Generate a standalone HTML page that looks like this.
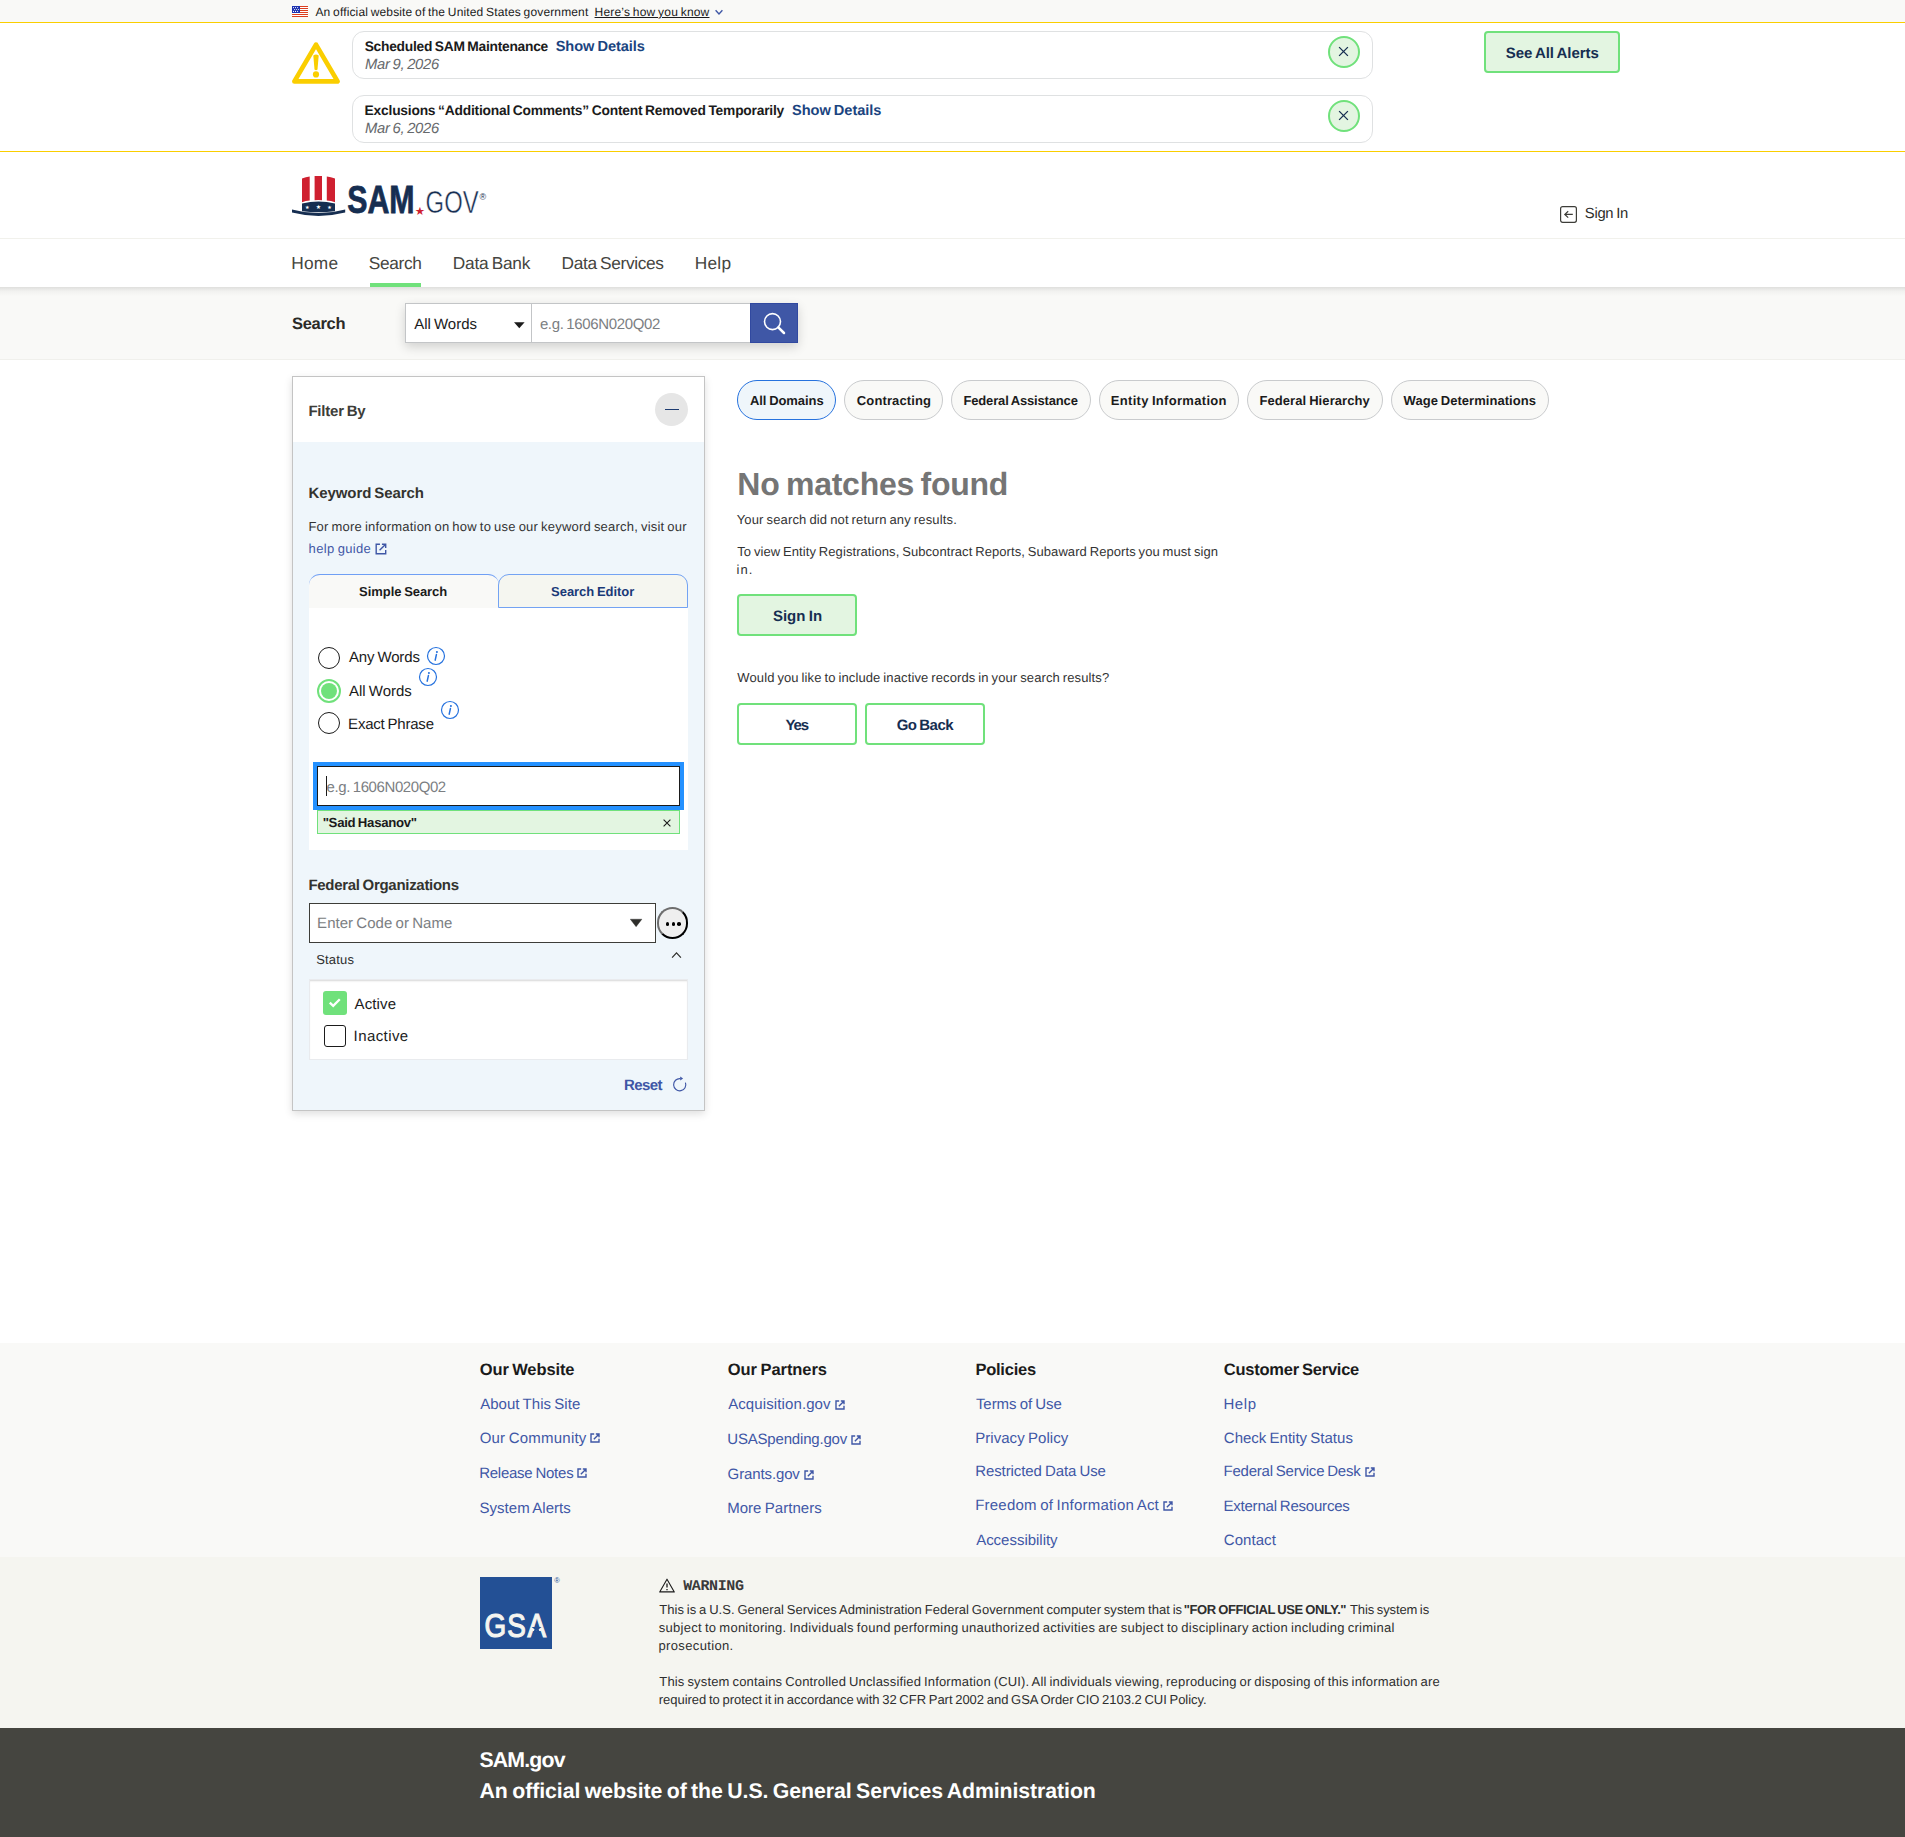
<!DOCTYPE html>
<html lang="en"><head><meta charset="utf-8"><title>SAM.gov | Search</title>
<style>
html,body{margin:0;padding:0}
body{width:1905px;height:1837px;position:relative;overflow:hidden;background:#fff;font-family:"Liberation Sans", sans-serif;color:#1b1b1b}
.b{position:absolute;box-sizing:border-box}
.t{position:absolute;display:block;margin:0;padding:0;white-space:pre;line-height:20px;font-family:"Liberation Sans", sans-serif;font-weight:400;color:#1b1b1b;text-decoration:none;text-rendering:geometricPrecision}
svg{position:absolute;overflow:visible}

</style></head><body>
<div class="b" style="left:0px;top:0px;width:1905px;height:22px;background:#f9f9f7"></div>
<div class="b" style="left:0px;top:22px;width:1905px;height:130px;background:#fff;border-top:1px solid #face00;border-bottom:1px solid #face00"></div>
<div class="b" style="left:0px;top:238px;width:1905px;height:1px;background:#f1f1ec"></div>
<div class="b" style="left:0px;top:287px;width:1905px;height:73px;background:#f9f9f7;border-bottom:1px solid #f0f0ec"></div>
<div class="b" style="left:0px;top:287px;width:1905px;height:9px;background:linear-gradient(#dfdfdd,#f1f1ef 45%,#f9f9f7)"></div>
<div class="b" style="left:0px;top:1343px;width:1905px;height:214px;background:#f9f9f7"></div>
<div class="b" style="left:0px;top:1557px;width:1905px;height:171px;background:#f5f5f0"></div>
<div class="b" style="left:0px;top:1728px;width:1905px;height:109px;background:#454540"></div>
<svg style="left:292px;top:6px" width="16" height="11" viewBox="0 0 16 11"><rect width="16" height="11" fill="#fff"/>
<g fill="#db3e1f"><rect y="0" width="16" height="1"/><rect y="2" width="16" height="1"/><rect y="4" width="16" height="1"/><rect y="6" width="16" height="1"/><rect y="8" width="16" height="1"/><rect y="10" width="16" height="1"/></g>
<rect width="8" height="7" fill="#1e33b1"/><g fill="#fff"><circle cx="1.5" cy="1.6" r=".55"/><circle cx="3.5" cy="1.6" r=".55"/><circle cx="5.6" cy="1.6" r=".55"/><circle cx="2.6" cy="3.5" r=".55"/><circle cx="4.6" cy="3.5" r=".55"/><circle cx="6.6" cy="3.5" r=".55"/><circle cx="1.5" cy="5.4" r=".55"/><circle cx="3.5" cy="5.4" r=".55"/><circle cx="5.6" cy="5.4" r=".55"/></g></svg>
<span class="t" style="left:315.46px;top:1.84px;font-size:12px;letter-spacing:0.138px;word-spacing:-0.77px;">An official website of the United States government</span>
<span class="t" style="left:594.56px;top:1.84px;font-size:12px;letter-spacing:0.178px;word-spacing:-0.77px;text-decoration:underline;text-underline-offset:1px;">Here’s how you know</span>
<svg style="left:715px;top:9px" width="8" height="7" viewBox="0 0 8 7"><path d="M0.6 1.3 L4 4.9 L7.4 1.3" fill="none" stroke="#3f57a6" stroke-width="1.4"/></svg>
<svg style="left:292px;top:40px" width="48" height="46" viewBox="0 0 48 46"><path d="M24 4.6 L45.6 41.4 H2.4 Z" fill="none" stroke="#face00" stroke-width="4.7" stroke-linejoin="round"/><path d="M21.3 15.6 Q24 13.4 26.7 15.6 L25.5 29.6 Q24 30.8 22.5 29.6 Z" fill="#face00"/><circle cx="24" cy="34.4" r="3.1" fill="#face00"/></svg>
<div class="b" style="left:352px;top:31px;width:1021px;height:48px;border:1px solid #dfe1e2;border-radius:12px;background:#fff"></div>
<span class="t" style="left:364.67px;top:37.22px;font-size:13.8px;letter-spacing:-0.263px;word-spacing:-0.88px;font-weight:700;">Scheduled SAM Maintenance</span>
<a href="#" class="t" style="left:555.64px;top:36.94px;font-size:14.6px;letter-spacing:-0.052px;word-spacing:-0.93px;font-weight:700;color:#1a4480;">Show Details</a>
<span class="t" style="left:364.92px;top:54.87px;font-size:14.8px;letter-spacing:-0.274px;word-spacing:-0.95px;font-style:italic;color:#66696c;">Mar 9, 2026</span>
<div class="b" style="left:1328px;top:36px;width:32px;height:32px;border:2px solid #70e17b;border-radius:50%;background:#e3f5e1"></div>
<svg style="left:1338px;top:45.8px" width="11" height="11" viewBox="0 0 11 11"><path d="M1.1 1.1 L9.9 9.9 M9.9 1.1 L1.1 9.9" stroke="#162e51" stroke-width="1.3" fill="none"/></svg>
<div class="b" style="left:352px;top:95px;width:1021px;height:48px;border:1px solid #dfe1e2;border-radius:12px;background:#fff"></div>
<span class="t" style="left:364.62px;top:101.22px;font-size:13.8px;letter-spacing:-0.215px;word-spacing:-0.88px;font-weight:700;">Exclusions “Additional Comments” Content Removed Temporarily</span>
<a href="#" class="t" style="left:792.02px;top:100.94px;font-size:14.6px;letter-spacing:-0.039px;word-spacing:-0.93px;font-weight:700;color:#1a4480;">Show Details</a>
<span class="t" style="left:364.92px;top:118.87px;font-size:14.8px;letter-spacing:-0.274px;word-spacing:-0.95px;font-style:italic;color:#66696c;">Mar 6, 2026</span>
<div class="b" style="left:1328px;top:100px;width:32px;height:32px;border:2px solid #70e17b;border-radius:50%;background:#e3f5e1"></div>
<svg style="left:1338px;top:109.8px" width="11" height="11" viewBox="0 0 11 11"><path d="M1.1 1.1 L9.9 9.9 M9.9 1.1 L1.1 9.9" stroke="#162e51" stroke-width="1.3" fill="none"/></svg>
<div class="b" style="left:1484px;top:31px;width:136px;height:42px;border:2px solid #70e17b;border-radius:4px;background:#e3f5e1"></div>
<span class="t" style="left:1505.83px;top:43.80px;font-size:15px;letter-spacing:-0.056px;word-spacing:-0.96px;font-weight:700;color:#162e51;">See All Alerts</span>
<svg style="left:290px;top:174px" width="200" height="44" viewBox="290 174 200 44">
<g fill="#cf2030"><path d="M302 178.6 Q305.8 177.2 309.7 176.6 V200.6 Q305.8 201 302 202.2 Z"/><path d="M314.6 176.1 Q318.3 175.8 322 176.1 V200.2 Q318.3 199.9 314.6 200.2 Z"/><path d="M326.8 176.6 Q331 177.2 335 178.6 V202.2 Q331 201 326.8 200.6 Z"/></g>
<path d="M302 211.3 V203.6 Q318.5 199.2 335 203.6 V211.3 Q318.5 213 302 211.3 Z" fill="#162e51"/>
<path d="M292 209.4 Q318.5 216.8 345.2 209.4 L345.2 212.6 Q318.5 219.4 292 212.6 Z" fill="#162e51"/>
<g fill="#fff" font-size="5" font-family="DejaVu Sans, sans-serif" text-anchor="middle"><text x="307.3" y="208.6">★</text><text x="318.5" y="208.9" font-size="6">★</text><text x="329.6" y="208.6">★</text></g>
<text x="347.3" y="212.7" font-family="Liberation Sans, sans-serif" font-weight="700" font-size="38.6" fill="#162e51" textLength="67.3" lengthAdjust="spacingAndGlyphs" stroke="#162e51" stroke-width="0.8">SAM</text>
<text x="419.9" y="215.2" font-family="DejaVu Sans, sans-serif" font-size="11.5" fill="#cf2030" text-anchor="middle">★</text>
<text x="425.6" y="213.2" font-family="Liberation Sans, sans-serif" font-weight="400" font-size="31.2" fill="#162e51" textLength="53" lengthAdjust="spacingAndGlyphs" stroke="#fff" stroke-width="0.5">GOV</text>
<text x="479.5" y="199.6" font-family="Liberation Sans, sans-serif" font-size="9" fill="#162e51">®</text>
</svg>
<svg style="left:1560px;top:206px" width="18" height="18" viewBox="0 0 18 18"><rect x="0.6" y="0.7" width="15.8" height="15.6" rx="2" fill="none" stroke="#3d3d38" stroke-width="1.2"/><path d="M12.8 8.4 H5 M8.2 5.2 L4.8 8.4 L8.2 11.6" fill="none" stroke="#3d3d38" stroke-width="1.2"/></svg>
<span class="t" style="left:1584.85px;top:203.87px;font-size:14.8px;letter-spacing:-0.290px;word-spacing:-0.95px;color:#2e2e2a;">Sign In</span>
<a href="#" class="t" style="left:291.17px;top:253.00px;font-size:17.3px;letter-spacing:0.259px;color:#454540;">Home</a>
<a href="#" class="t" style="left:368.76px;top:253.00px;font-size:17.3px;letter-spacing:-0.339px;color:#454540;">Search</a>
<a href="#" class="t" style="left:452.87px;top:253.00px;font-size:17.3px;letter-spacing:-0.267px;word-spacing:-1.11px;color:#454540;">Data Bank</a>
<a href="#" class="t" style="left:561.60px;top:253.00px;font-size:17.3px;letter-spacing:-0.350px;word-spacing:-1.11px;color:#454540;">Data Services</a>
<a href="#" class="t" style="left:694.66px;top:253.00px;font-size:17.3px;letter-spacing:0.281px;color:#454540;">Help</a>
<div class="b" style="left:370px;top:283px;width:51px;height:4px;background:#70e17b"></div>
<span class="t" style="left:291.94px;top:314.28px;font-size:16.5px;letter-spacing:-0.296px;font-weight:700;color:#2a2a27;">Search</span>
<div class="b" style="left:405px;top:303px;width:393px;height:40px;box-shadow:0 4px 10px rgba(0,0,0,.16);background:#fff"></div>
<div class="b" style="left:405px;top:303px;width:127px;height:40px;border:1px solid #c3c5c7;background:#fff"></div>
<div class="b" style="left:531px;top:303px;width:220px;height:40px;border:1px solid #c3c5c7;background:#fff"></div>
<div class="b" style="left:750px;top:303px;width:48px;height:40px;background:#3f57a6;border:1px solid #3149a0"></div>
<span class="t" style="left:414.15px;top:314.80px;font-size:15px;letter-spacing:-0.008px;word-spacing:-0.96px;">All Words</span>
<svg style="left:514px;top:321.5px" width="11" height="7" viewBox="0 0 11 7"><path d="M0 0.3 H10.6 L5.3 6.2 Z" fill="#1b1b1b"/></svg>
<span class="t" style="left:539.89px;top:314.80px;font-size:15px;letter-spacing:-0.349px;word-spacing:-0.96px;color:#7b7e82;">e.g. 1606N020Q02</span>
<svg style="left:760px;top:309px" width="28" height="28" viewBox="760 309 28 28"><circle cx="772.5" cy="321.6" r="8" fill="none" stroke="#fff" stroke-width="1.6"/><path d="M778.3 327.3 L784 333" stroke="#fff" stroke-width="2.5" stroke-linecap="round"/></svg>
<div class="b" style="left:292px;top:376px;width:413px;height:735px;border:1px solid #c4c4c4;background:#eff6fb;box-shadow:0 3px 8px rgba(0,0,0,.13)"></div>
<div class="b" style="left:293px;top:377px;width:411px;height:65px;background:#fff"></div>
<h2 class="t" style="left:308.40px;top:401.80px;font-size:15px;letter-spacing:-0.217px;word-spacing:-0.96px;font-weight:700;color:#3d3d39;">Filter By</h2>
<div class="b" style="left:655px;top:393px;width:33px;height:33px;border-radius:50%;background:#e6e6e6"></div>
<div class="b" style="left:665px;top:408.8px;width:14px;height:1.5px;background:#1d3b70"></div>
<h3 class="t" style="left:308.45px;top:483.80px;font-size:15px;letter-spacing:-0.079px;word-spacing:-0.96px;font-weight:700;color:#33332f;">Keyword Search</h3>
<span class="t" style="left:308.40px;top:517.49px;font-size:13px;letter-spacing:0.207px;word-spacing:-0.83px;color:#333;">For more information on how to use our keyword search, visit our</span>
<a href="#" class="t" style="left:308.57px;top:539.49px;font-size:13px;letter-spacing:0.345px;word-spacing:-0.83px;color:#3f57a6;">help guide</a>
<svg style="left:375.1px;top:542.6px" width="11.9" height="11.9" viewBox="0 0 12 12"><path d="M5 1.2 H1.2 V10.8 H10.8 V7 M7 1.2 H10.8 V5 M10.6 1.4 L4.6 7.4" fill="none" stroke="#3f57a6" stroke-width="1.41"/></svg>
<div class="b" style="left:309px;top:574px;width:190px;height:34px;background:#f9f9f7;border-top:1px solid #6f9ff5;border-radius:11px 11px 0 0"></div>
<div class="b" style="left:498px;top:574px;width:190px;height:34px;background:#f5f6f0;border:1px solid #73a3f3;border-radius:11px 11px 0 0"></div>
<span class="t" style="left:359.11px;top:582.49px;font-size:13px;letter-spacing:-0.053px;word-spacing:-0.83px;font-weight:700;">Simple Search</span>
<span class="t" style="left:551.11px;top:582.49px;font-size:13px;letter-spacing:-0.046px;word-spacing:-0.83px;font-weight:700;color:#1a3a78;">Search Editor</span>
<div class="b" style="left:309px;top:608px;width:379px;height:242px;background:#fff"></div>
<div class="b" style="left:318px;top:646.8px;width:22px;height:22px;border-radius:50%;border:1.5px solid #1b1b1b;background:#fff"></div>
<span class="t" style="left:349.03px;top:647.80px;font-size:15px;letter-spacing:-0.157px;word-spacing:-0.96px;">Any Words</span>
<svg style="left:425.9px;top:646.3px" width="20" height="20" viewBox="0 0 20 20"><circle cx="10" cy="10" r="8.5" fill="none" stroke="#2672de" stroke-width="1.2"/><circle cx="10.9" cy="6" r="1.05" fill="#2672de"/><path d="M10.4 8.6 L9.2 14.2" stroke="#2672de" stroke-width="1.5" stroke-linecap="round"/></svg>
<div class="b" style="left:317px;top:678.7px;width:24px;height:24px;border-radius:50%;border:2px solid #70e17b;background:#fff"></div>
<div class="b" style="left:321px;top:682.7px;width:16px;height:16px;border-radius:50%;background:#70e17b"></div>
<span class="t" style="left:349.03px;top:681.80px;font-size:15px;letter-spacing:-0.014px;word-spacing:-0.96px;">All Words</span>
<svg style="left:418.1px;top:667.3px" width="20" height="20" viewBox="0 0 20 20"><circle cx="10" cy="10" r="8.5" fill="none" stroke="#2672de" stroke-width="1.2"/><circle cx="10.9" cy="6" r="1.05" fill="#2672de"/><path d="M10.4 8.6 L9.2 14.2" stroke="#2672de" stroke-width="1.5" stroke-linecap="round"/></svg>
<div class="b" style="left:318px;top:712px;width:22px;height:22px;border-radius:50%;border:1.5px solid #1b1b1b;background:#fff"></div>
<span class="t" style="left:348.10px;top:714.80px;font-size:15px;letter-spacing:-0.214px;word-spacing:-0.96px;">Exact Phrase</span>
<svg style="left:440px;top:700.1px" width="20" height="20" viewBox="0 0 20 20"><circle cx="10" cy="10" r="8.5" fill="none" stroke="#2672de" stroke-width="1.2"/><circle cx="10.9" cy="6" r="1.05" fill="#2672de"/><path d="M10.4 8.6 L9.2 14.2" stroke="#2672de" stroke-width="1.5" stroke-linecap="round"/></svg>
<div class="b" style="left:313px;top:762px;width:371px;height:47.6px;background:#2491ff"></div>
<div class="b" style="left:317px;top:766px;width:363px;height:39.7px;background:#fff;border:1px solid #1b1b1b"></div>
<span class="t" style="left:326.61px;top:777.80px;font-size:15px;letter-spacing:-0.415px;word-spacing:-0.96px;color:#7b7e82;">e.g. 1606N020Q02</span>
<div class="b" style="left:325.6px;top:776.4px;width:1.2px;height:19.6px;background:#1b1b1b"></div>
<div class="b" style="left:317px;top:810.2px;width:363px;height:23.8px;background:#e3f5e1;border:1px solid #70e17b"></div>
<span class="t" style="left:322.66px;top:813.42px;font-size:13.2px;letter-spacing:-0.286px;word-spacing:-0.84px;font-weight:700;">"Said Hasanov"</span>
<svg style="left:663px;top:819px" width="8" height="8" viewBox="0 0 8 8"><path d="M0.6 0.6 L7.4 7.4 M7.4 0.6 L0.6 7.4" stroke="#1b1b1b" stroke-width="1.1"/></svg>
<h3 class="t" style="left:308.40px;top:875.80px;font-size:15px;letter-spacing:-0.296px;word-spacing:-0.96px;font-weight:700;color:#33332f;">Federal Organizations</h3>
<div class="b" style="left:309px;top:903px;width:347px;height:40px;background:#fff;border:1px solid #3d3d38"></div>
<span class="t" style="left:317.10px;top:913.80px;font-size:15px;letter-spacing:0.028px;word-spacing:-0.96px;color:#7b7e82;">Enter Code or Name</span>
<svg style="left:629.9px;top:919px" width="12.2" height="8" viewBox="0 0 12.2 8"><path d="M0.3 0.2 H11.9 L6.1 7.7 Z" fill="#2e2e2a" stroke="#2e2e2a" stroke-width="0.4" stroke-linejoin="round"/></svg>
<div class="b" style="left:656.6px;top:907.2px;width:31.4px;height:31.4px;border-radius:50%;border:2px solid #000;border-top-color:#6e6e6e;border-left-color:#6e6e6e;background:#efefef"></div>
<div class="b" style="left:665.7px;top:922.3px;width:3.6px;height:3.6px;border-radius:50%;background:#000"></div>
<div class="b" style="left:671.5px;top:922.3px;width:3.6px;height:3.6px;border-radius:50%;background:#000"></div>
<div class="b" style="left:677.3000000000001px;top:922.3px;width:3.6px;height:3.6px;border-radius:50%;background:#000"></div>
<span class="t" style="left:316.24px;top:950.49px;font-size:13px;letter-spacing:0.164px;color:#2e2e2e;">Status</span>
<svg style="left:671px;top:952px" width="11" height="7" viewBox="671 952 11 7"><path d="M672.1 957.6 L676.5 952.9 L680.9 957.6" fill="none" stroke="#2e2e2a" stroke-width="1.2"/></svg>
<div class="b" style="left:309px;top:979px;width:379px;height:80.5px;background:#fff;border:1px solid #e9ebee;box-shadow:inset 0 2px 2px -1px rgba(0,0,0,.16)"></div>
<div class="b" style="left:322.8px;top:991px;width:24.2px;height:23.8px;background:#70e17b;border-radius:3px"></div>
<svg style="left:328px;top:997px" width="14" height="12" viewBox="0 0 14 12"><path d="M1.8 5.6 L5.2 8.9 L11.8 2.2" fill="none" stroke="#fff" stroke-width="2.3"/></svg>
<span class="t" style="left:354.62px;top:994.80px;font-size:15px;letter-spacing:0.110px;">Active</span>
<div class="b" style="left:324px;top:1025px;width:22px;height:22px;border:1.5px solid #1b1b1b;border-radius:3px;background:#fff"></div>
<span class="t" style="left:353.60px;top:1026.80px;font-size:15px;letter-spacing:0.417px;">Inactive</span>
<a href="#" class="t" style="left:624.08px;top:1075.80px;font-size:15px;letter-spacing:-0.582px;font-weight:700;color:#3f57a6;">Reset</a>
<svg style="left:670px;top:1074px" width="20" height="20" viewBox="670 1074 20 20"><path d="M685.45 1082.6 A6.1 6.1 0 1 1 680.3 1078.62" fill="none" stroke="#3f57a6" stroke-width="1.15"/><path d="M680.2 1076.4 L683.1 1078.5 L680.2 1080.6 Z" fill="#3f57a6"/></svg>
<div class="b" style="left:737.2px;top:380px;width:98.79999999999995px;height:40px;border:1px solid #2672de;background:#eff6fb;border-radius:20px"></div>
<span class="t" style="left:749.99px;top:391.49px;font-size:13px;letter-spacing:-0.059px;word-spacing:-0.83px;font-weight:700;">All Domains</span>
<div class="b" style="left:844.2px;top:380px;width:98.39999999999998px;height:40px;border:1px solid #c9cbcd;background:#f9f9f7;border-radius:20px"></div>
<span class="t" style="left:856.87px;top:391.49px;font-size:13px;letter-spacing:0.118px;font-weight:700;">Contracting</span>
<div class="b" style="left:951.2px;top:380px;width:139.5px;height:40px;border:1px solid #c9cbcd;background:#f9f9f7;border-radius:20px"></div>
<span class="t" style="left:963.50px;top:391.49px;font-size:13px;letter-spacing:-0.165px;word-spacing:-0.83px;font-weight:700;">Federal Assistance</span>
<div class="b" style="left:1099.2px;top:380px;width:139.5px;height:40px;border:1px solid #c9cbcd;background:#f9f9f7;border-radius:20px"></div>
<span class="t" style="left:1110.81px;top:391.49px;font-size:13px;letter-spacing:0.316px;word-spacing:-0.83px;font-weight:700;">Entity Information</span>
<div class="b" style="left:1247.3px;top:380px;width:135.5px;height:40px;border:1px solid #c9cbcd;background:#f9f9f7;border-radius:20px"></div>
<span class="t" style="left:1259.44px;top:391.49px;font-size:13px;letter-spacing:0.085px;word-spacing:-0.83px;font-weight:700;">Federal Hierarchy</span>
<div class="b" style="left:1391.3px;top:380px;width:157.60000000000014px;height:40px;border:1px solid #c9cbcd;background:#f9f9f7;border-radius:20px"></div>
<span class="t" style="left:1403.61px;top:391.49px;font-size:13px;letter-spacing:0.039px;word-spacing:-0.83px;font-weight:700;">Wage Determinations</span>
<h1 class="t" style="left:737.30px;top:473.91px;font-size:32px;letter-spacing:-0.265px;word-spacing:-2.05px;font-weight:700;color:#757575;">No matches found</h1>
<span class="t" style="left:736.70px;top:510.49px;font-size:13px;letter-spacing:0.155px;word-spacing:-0.83px;color:#333;">Your search did not return any results.</span>
<span class="t" style="left:737.21px;top:542.49px;font-size:13px;letter-spacing:0.071px;word-spacing:-0.83px;color:#333;">To view Entity Registrations, Subcontract Reports, Subaward Reports you must sign</span>
<span class="t" style="left:736.61px;top:560.49px;font-size:13px;letter-spacing:0.993px;color:#333;">in.</span>
<div class="b" style="left:737px;top:594px;width:120px;height:42px;border:2px solid #70e17b;border-radius:4px;background:#e3f5e1"></div>
<span class="t" style="left:772.90px;top:606.80px;font-size:15px;letter-spacing:0.022px;word-spacing:-0.96px;font-weight:700;color:#162e51;">Sign In</span>
<span class="t" style="left:737.31px;top:668.49px;font-size:13px;letter-spacing:0.116px;word-spacing:-0.83px;color:#333;">Would you like to include inactive records in your search results?</span>
<div class="b" style="left:737px;top:703px;width:120px;height:42px;border:2px solid #70e17b;border-radius:4px;background:#fff"></div>
<span class="t" style="left:785.52px;top:715.80px;font-size:15px;letter-spacing:-1.086px;font-weight:700;color:#162e51;">Yes</span>
<div class="b" style="left:865px;top:703px;width:120px;height:42px;border:2px solid #70e17b;border-radius:4px;background:#fff"></div>
<span class="t" style="left:896.64px;top:715.80px;font-size:15px;letter-spacing:-0.473px;word-spacing:-0.96px;font-weight:700;color:#162e51;">Go Back</span>
<span class="t" style="left:479.77px;top:1360.28px;font-size:16.5px;letter-spacing:-0.105px;word-spacing:-1.06px;font-weight:700;">Our Website</span>
<span class="t" style="left:727.77px;top:1360.28px;font-size:16.5px;letter-spacing:-0.049px;word-spacing:-1.06px;font-weight:700;">Our Partners</span>
<span class="t" style="left:975.42px;top:1360.28px;font-size:16.5px;letter-spacing:-0.236px;font-weight:700;">Policies</span>
<span class="t" style="left:1223.83px;top:1360.28px;font-size:16.5px;letter-spacing:-0.254px;word-spacing:-1.06px;font-weight:700;">Customer Service</span>
<a href="#" class="t" style="left:480.15px;top:1394.80px;font-size:15px;letter-spacing:0.044px;word-spacing:-0.96px;color:#3f57a6;">About This Site</a>
<a href="#" class="t" style="left:479.68px;top:1428.80px;font-size:15px;letter-spacing:0.215px;word-spacing:-0.96px;color:#3f57a6;">Our Community</a>
<svg style="left:590.4px;top:1433.3px" width="10" height="10" viewBox="0 0 12 12"><path d="M5 1.2 H1.2 V10.8 H10.8 V7 M7 1.2 H10.8 V5 M10.6 1.4 L4.6 7.4" fill="none" stroke="#3f57a6" stroke-width="1.68"/></svg>
<a href="#" class="t" style="left:479.17px;top:1463.80px;font-size:15px;letter-spacing:-0.246px;word-spacing:-0.96px;color:#3f57a6;">Release Notes</a>
<svg style="left:577.3px;top:1468.3px" width="10" height="10" viewBox="0 0 12 12"><path d="M5 1.2 H1.2 V10.8 H10.8 V7 M7 1.2 H10.8 V5 M10.6 1.4 L4.6 7.4" fill="none" stroke="#3f57a6" stroke-width="1.68"/></svg>
<a href="#" class="t" style="left:479.40px;top:1498.80px;font-size:15px;letter-spacing:0.060px;word-spacing:-0.96px;color:#3f57a6;">System Alerts</a>
<a href="#" class="t" style="left:728.15px;top:1394.80px;font-size:15px;letter-spacing:0.110px;color:#3f57a6;">Acquisition.gov</a>
<svg style="left:834.8px;top:1400.3999999999999px" width="10" height="10" viewBox="0 0 12 12"><path d="M5 1.2 H1.2 V10.8 H10.8 V7 M7 1.2 H10.8 V5 M10.6 1.4 L4.6 7.4" fill="none" stroke="#3f57a6" stroke-width="1.68"/></svg>
<a href="#" class="t" style="left:727.24px;top:1429.80px;font-size:15px;letter-spacing:-0.184px;color:#3f57a6;">USASpending.gov</a>
<svg style="left:851.3px;top:1435.3999999999999px" width="10" height="10" viewBox="0 0 12 12"><path d="M5 1.2 H1.2 V10.8 H10.8 V7 M7 1.2 H10.8 V5 M10.6 1.4 L4.6 7.4" fill="none" stroke="#3f57a6" stroke-width="1.68"/></svg>
<a href="#" class="t" style="left:727.61px;top:1464.80px;font-size:15px;letter-spacing:-0.123px;color:#3f57a6;">Grants.gov</a>
<svg style="left:803.8px;top:1470.3999999999999px" width="10" height="10" viewBox="0 0 12 12"><path d="M5 1.2 H1.2 V10.8 H10.8 V7 M7 1.2 H10.8 V5 M10.6 1.4 L4.6 7.4" fill="none" stroke="#3f57a6" stroke-width="1.68"/></svg>
<a href="#" class="t" style="left:727.17px;top:1498.80px;font-size:15px;letter-spacing:0.037px;word-spacing:-0.96px;color:#3f57a6;">More Partners</a>
<a href="#" class="t" style="left:975.89px;top:1394.80px;font-size:15px;letter-spacing:-0.039px;word-spacing:-0.96px;color:#3f57a6;">Terms of Use</a>
<a href="#" class="t" style="left:975.17px;top:1428.80px;font-size:15px;letter-spacing:0.050px;word-spacing:-0.96px;color:#3f57a6;">Privacy Policy</a>
<a href="#" class="t" style="left:975.17px;top:1461.80px;font-size:15px;letter-spacing:-0.087px;word-spacing:-0.96px;color:#3f57a6;">Restricted Data Use</a>
<a href="#" class="t" style="left:975.17px;top:1495.80px;font-size:15px;letter-spacing:0.223px;word-spacing:-0.96px;color:#3f57a6;">Freedom of Information Act</a>
<svg style="left:1163.1000000000001px;top:1501.3999999999999px" width="10" height="10" viewBox="0 0 12 12"><path d="M5 1.2 H1.2 V10.8 H10.8 V7 M7 1.2 H10.8 V5 M10.6 1.4 L4.6 7.4" fill="none" stroke="#3f57a6" stroke-width="1.68"/></svg>
<a href="#" class="t" style="left:976.15px;top:1530.80px;font-size:15px;letter-spacing:-0.018px;color:#3f57a6;">Accessibility</a>
<a href="#" class="t" style="left:1223.44px;top:1394.80px;font-size:15px;letter-spacing:0.573px;color:#3f57a6;">Help</a>
<a href="#" class="t" style="left:1223.80px;top:1428.80px;font-size:15px;letter-spacing:0.006px;word-spacing:-0.96px;color:#3f57a6;">Check Entity Status</a>
<a href="#" class="t" style="left:1223.44px;top:1461.80px;font-size:15px;letter-spacing:-0.217px;word-spacing:-0.96px;color:#3f57a6;">Federal Service Desk</a>
<svg style="left:1364.9px;top:1467.3999999999999px" width="10" height="10" viewBox="0 0 12 12"><path d="M5 1.2 H1.2 V10.8 H10.8 V7 M7 1.2 H10.8 V5 M10.6 1.4 L4.6 7.4" fill="none" stroke="#3f57a6" stroke-width="1.68"/></svg>
<a href="#" class="t" style="left:1223.44px;top:1496.80px;font-size:15px;letter-spacing:-0.210px;word-spacing:-0.96px;color:#3f57a6;">External Resources</a>
<a href="#" class="t" style="left:1223.80px;top:1530.80px;font-size:15px;letter-spacing:0.052px;color:#3f57a6;">Contact</a>
<div class="b" style="left:480px;top:1577px;width:72px;height:72px;background:#235095"></div>
<svg style="left:480px;top:1570px" width="84" height="82" viewBox="480 1570 84 82">
<g font-family="Liberation Sans, sans-serif" font-size="34" fill="#f5f5f0" stroke="#f5f5f0" stroke-width="1.2">
<text transform="scale(0.82 1)" x="590.79 618.61 643.41" y="1637">GSA</text></g>
<path d="M536.6 1623.3 L537.9 1626.9 L541.6 1627.0 L538.7 1629.3 L539.7 1632.8 L536.6 1630.8 L533.2 1632.8 L534.5 1629.3 L531.6 1627.0 L535.3 1626.9 Z" fill="#235095"/>
<text x="554.2" y="1582.6" font-family="Liberation Sans, sans-serif" font-size="7.5" fill="#235095">®</text></svg>
<svg style="left:659px;top:1577.6px" width="17" height="15" viewBox="0 0 17 15"><path d="M8 1.2 L15.3 13.9 H0.7 Z" fill="none" stroke="#1b1b1b" stroke-width="1.1" stroke-linejoin="round"/><path d="M8 5.4 V9.6 M8 10.9 V12.3" stroke="#1b1b1b" stroke-width="1.3"/></svg>
<span class="t" style="left:683.16px;top:1577.01px;font-size:15px;letter-spacing:-0.375px;font-weight:700;color:#3a3a3a;font-family:'Liberation Mono', monospace;">WARNING</span>
<span class="t" style="left:659.30px;top:1600.49px;font-size:13px;letter-spacing:0.036px;word-spacing:-0.83px;color:#2e2e2e;">This is a U.S. General Services Administration Federal Government computer system that is</span>
<span class="t" style="left:1183.79px;top:1600.49px;font-size:13px;letter-spacing:-0.386px;word-spacing:-0.83px;font-weight:700;color:#2e2e2e;">"FOR OFFICIAL USE ONLY."</span>
<span class="t" style="left:1350.06px;top:1600.49px;font-size:13px;letter-spacing:-0.123px;word-spacing:-0.83px;color:#2e2e2e;">This system is</span>
<span class="t" style="left:658.87px;top:1618.49px;font-size:13px;letter-spacing:0.259px;word-spacing:-0.83px;color:#2e2e2e;">subject to monitoring. Individuals found performing unauthorized activities are subject to disciplinary action including criminal</span>
<span class="t" style="left:658.54px;top:1636.49px;font-size:13px;letter-spacing:0.348px;color:#2e2e2e;">prosecution.</span>
<span class="t" style="left:659.30px;top:1672.49px;font-size:13px;letter-spacing:0.162px;word-spacing:-0.83px;color:#2e2e2e;">This system contains Controlled Unclassified Information (CUI). All individuals viewing, reproducing or disposing of this information are</span>
<span class="t" style="left:658.78px;top:1690.49px;font-size:13px;letter-spacing:-0.030px;word-spacing:-0.83px;color:#2e2e2e;">required to protect it in accordance with 32 CFR Part 2002 and GSA Order CIO 2103.2 CUI Policy.</span>
<span class="t" style="left:479.39px;top:1749.62px;font-size:21.3px;letter-spacing:-0.822px;font-weight:700;color:#fff;">SAM.gov</span>
<span class="t" style="left:479.59px;top:1780.62px;font-size:21.3px;letter-spacing:-0.084px;word-spacing:-1.36px;font-weight:700;color:#fff;">An official website of the U.S. General Services Administration</span>
</body></html>
